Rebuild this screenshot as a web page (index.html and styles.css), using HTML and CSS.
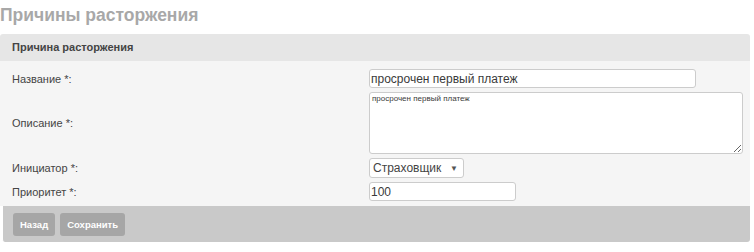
FILE: index.html
```html
<!DOCTYPE html>
<html lang="ru">

<head>
    <meta charset="UTF-8">
    <title>Причины расторжения</title>
    <link rel="stylesheet" href="styles.css">
</head>

<body>
    <h1 class="title">Причины расторжения</h1>
    <div class="panel">
        <div class="panel-head">Причина расторжения</div>
        <div class="panel-body">
            <div class="row">
                <label class="lbl">Название *:</label>
                <input class="inp inp-name" type="text" value="просрочен первый платеж">
            </div>
            <div class="row">
                <label class="lbl">Описание *:</label>
                <textarea class="area">просрочен первый платеж</textarea>
            </div>
            <div class="row">
                <label class="lbl">Инициатор *:</label>
                <div class="sel">
                    <span>Страховщик</span>
                    <span class="arrow">&#9660;</span>
                </div>
            </div>
            <div class="row">
                <label class="lbl">Приоритет *:</label>
                <input class="inp inp-prio" type="text" value="100">
            </div>
        </div>
        <div class="panel-foot">
            <button class="btn">Назад</button>
            <button class="btn">Сохранить</button>
        </div>
    </div>
</body>

</html>
```

FILE: styles.css
```css
body {
    margin: 0;
    font-family: "Liberation Sans", Arial, sans-serif;
    color: #333;
    background-color: #fff;
}

.title {
    margin: 0;
    padding: 5px 0 0 0;
    height: 29px;
    font-size: 17.5px;
    font-weight: bold;
    color: #a8a8a8;
}

.panel {
    width: 750px;
}

.panel-head {
    height: 27px;
    line-height: 27px;
    padding-left: 12px;
    background-color: #e6e6e6;
    border-radius: 3px 3px 0 0;
    font-size: 11px;
    font-weight: bold;
    color: #444;
}

.panel-body {
    background-color: #f5f5f5;
    padding: 8px 0 5px 12px;
}

.row {
    display: grid;
    grid-template-columns: 357px 1fr;
    align-items: center;
    margin-bottom: 4px;
}

.row:last-child {
    margin-bottom: 0;
}

.lbl {
    font-size: 11px;
    color: #444;
}

.inp {
    box-sizing: border-box;
    height: 19px;
    border: 1px solid #ccc;
    border-radius: 3px;
    background-color: #fff;
    font-family: "Liberation Sans", Arial, sans-serif;
    font-size: 12px;
    color: #3a3a3a;
    padding: 0 1px;
}

.inp-name {
    width: 327px;
}

.inp-prio {
    width: 147px;
}

.area {
    box-sizing: border-box;
    width: 374px;
    height: 62px;
    margin: 0;
    border: 1px solid #ccc;
    border-radius: 3px;
    background-color: #fff;
    font-family: "Liberation Sans", Arial, sans-serif;
    font-size: 8px;
    color: #3a3a3a;
    padding: 1px 2px;
}

.sel {
    box-sizing: border-box;
    display: flex;
    justify-content: space-between;
    align-items: center;
    width: 95px;
    height: 20px;
    padding: 0 5px 0 3px;
    border: 1px solid #ccc;
    border-radius: 3px;
    background-color: #fff;
    font-size: 12px;
    color: #444;
}

.arrow {
    font-size: 8px;
    color: #555;
}

.panel-foot {
    display: flex;
    gap: 5px;
    height: 36px;
    align-items: center;
    padding-left: 10px;
    margin-left: 2px;
    background-color: #c9c9c9;
    border-left: 1px solid #fff;
    border-radius: 0 0 3px 3px;
}

.btn {
    height: 23px;
    padding: 0 7px;
    border: 0;
    border-radius: 3px;
    background-color: #a6a6a6;
    color: #fff;
    font-family: "Liberation Sans", Arial, sans-serif;
    font-size: 9.5px;
    font-weight: bold;
}
```
